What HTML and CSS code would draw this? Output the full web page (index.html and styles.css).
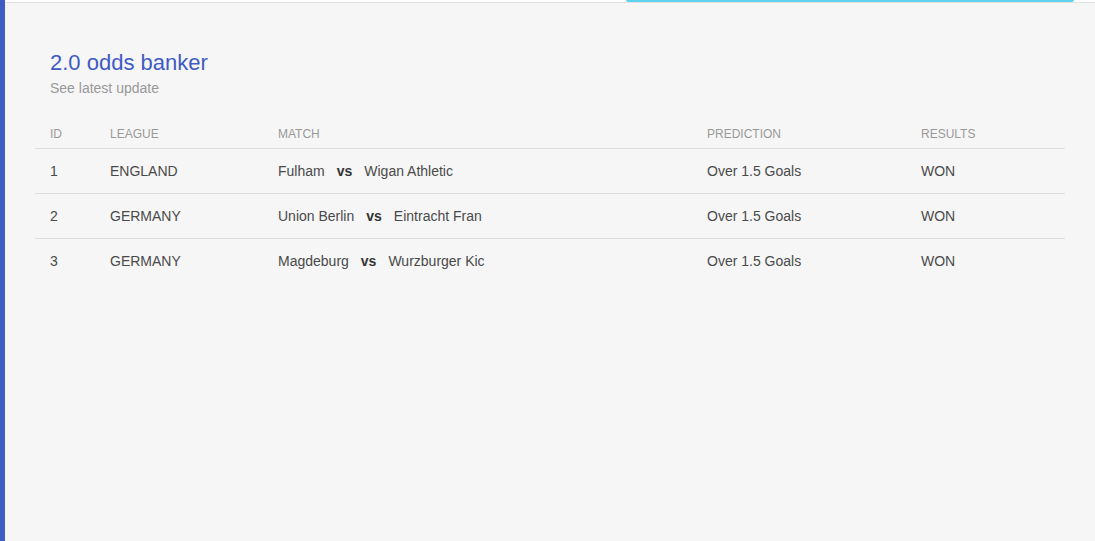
FILE: index.html
```html
<!DOCTYPE html>
<html lang="en">

<head>
  <meta charset="UTF-8">
  <meta name="viewport" content="width=device-width, initial-scale=1.0">
  <title>2.0 odds banker</title>
  <link rel="stylesheet" href="styles.css">
</head>

<body>
  <div class="page">
    <div class="sidebar"></div>
    <div class="main">
      <div class="topbar">
        <div class="progress"></div>
      </div>

      <div class="content">
        <h1 class="title">2.0 odds banker</h1>
        <p class="subtitle">See latest update</p>

        <table class="odds-table">
          <thead>
            <tr>
              <th class="col-id">ID</th>
              <th class="col-league">League</th>
              <th class="col-match">Match</th>
              <th class="col-prediction">Prediction</th>
              <th>Results</th>
            </tr>
          </thead>
          <tbody>
            <tr>
              <td>1</td>
              <td>ENGLAND</td>
              <td>Fulham<b class="vs">vs</b>Wigan Athletic</td>
              <td>Over 1.5 Goals</td>
              <td>WON</td>
            </tr>
            <tr>
              <td>2</td>
              <td>GERMANY</td>
              <td>Union Berlin<b class="vs">vs</b>Eintracht Fran</td>
              <td>Over 1.5 Goals</td>
              <td>WON</td>
            </tr>
            <tr>
              <td>3</td>
              <td>GERMANY</td>
              <td>Magdeburg<b class="vs">vs</b>Wurzburger Kic</td>
              <td>Over 1.5 Goals</td>
              <td>WON</td>
            </tr>
          </tbody>
        </table>
      </div>
    </div>
  </div>
</body>

</html>
```

FILE: styles.css
```css
body {
  font-family: "Liberation Sans", Arial, sans-serif;
  margin: 0;
  padding: 0;
  background-color: #f6f6f6;
  color: #4a4a4a;
}

.page {
  display: flex;
  min-height: 100vh;
}

.sidebar {
  width: 5px;
  flex-shrink: 0;
  background-color: #3f5bc4;
}

.main {
  flex: 1;
}

.topbar {
  height: 2px;
  background-color: #fff;
  border-bottom: 1px solid #e2e2e2;
  display: flex;
  padding-left: 621px;
}

.progress {
  width: 448px;
  height: 2px;
  background-color: #5ed3f0;
  border-radius: 0 0 2px 2px;
}

.content {
  padding: 47px 30px 0 30px;
}

.title {
  margin: 0;
  padding-left: 15px;
  font-size: 22px;
  line-height: 26px;
  font-weight: normal;
  color: #3f5bc4;
}

.subtitle {
  margin: 4px 0 0 0;
  padding-left: 15px;
  font-size: 14px;
  line-height: 16px;
  color: #999;
}

.odds-table {
  width: 100%;
  margin-top: 20px;
  border-collapse: collapse;
}

.odds-table th {
  text-align: left;
  font-weight: normal;
  font-size: 12px;
  line-height: 14px;
  text-transform: uppercase;
  color: #999;
  padding: 11px 15px 7px 15px;
  border-bottom: 1px solid #ddd;
}

.odds-table td {
  font-size: 14px;
  line-height: 20px;
  padding: 12px 15px;
  color: #4a4a4a;
}

.odds-table tbody tr + tr td {
  border-top: 1px solid #ddd;
}

.col-id {
  width: 30px;
}

.col-league {
  width: 138px;
}

.col-match {
  width: 399px;
}

.col-prediction {
  width: 184px;
}

.vs {
  margin: 0 12px;
  color: #333;
}
```
